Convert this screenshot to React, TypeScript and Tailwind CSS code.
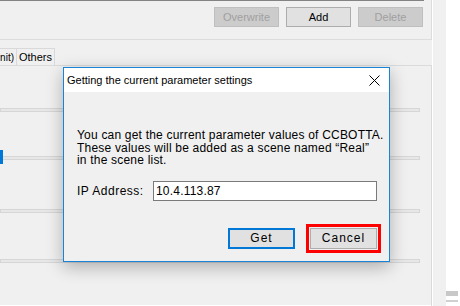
const ui = "font-['Liberation_Sans',Arial,sans-serif]";

function TopButton({ label, disabled }: { label: string; disabled?: boolean }) {
  return (
    <div
      className={
        "flex h-[20px] w-[65px] items-center justify-center border text-[11px] " +
        (disabled
          ? "border-[#bfbfbf] bg-[#cccccc] text-[#a0a0a0]"
          : "border-[#adadad] bg-[#e1e1e1] text-black")
      }
    >
      {label}
    </div>
  );
}

function Track() {
  return <div className="h-[4px] w-[420px] border border-[#d6d6d6] bg-[#e7e7e7]" />;
}

function Dialog() {
  return (
    <div
      className={`absolute left-[63px] top-[67px] flex h-[195px] w-[327px] flex-col border border-[#1883d7] bg-[#f0f0f0] shadow-[0_5px_16px_rgba(0,0,0,0.28)] ${ui}`}
    >
      <div className="flex h-[24px] items-center justify-between bg-white pl-[3px] pr-[9px] text-[11px] text-black">
        <span>Getting the current parameter settings</span>
        <svg width="11" height="11" viewBox="0 0 11 11">
          <path d="M0.5 0.5L10.5 10.5M10.5 0.5L0.5 10.5" stroke="#000" strokeWidth="1" />
        </svg>
      </div>
      <div className="flex flex-1 flex-col whitespace-nowrap pl-[13px] pt-[37px] text-[12px] tracking-[0.2px] text-black">
        <p className="leading-[12.5px]">
          You can get the current parameter values of CCBOTTA.
          <br />
          These values will be added as a scene named “Real”
          <br />
          in the scene list.
        </p>
        <div className="mt-[14px] flex items-center">
          <span className="w-[76px] tracking-[0.5px]">IP Address:</span>
          <div className="flex h-[20px] w-[224px] items-center border border-[#7a7a7a] bg-white pl-[2px]">
            10.4.113.87
          </div>
        </div>
        <div className="mt-[23px] flex items-center pl-[151px]">
          <div className="flex h-[21px] w-[67px] items-center justify-center border-2 border-[#0078d7] bg-[#e1e1e1] tracking-[1px]">
            Get
          </div>
          <div className="ml-[11px] border-[3px] border-[#ff0000] p-[1px]">
            <div className="flex h-[21px] w-[67px] items-center justify-center border border-[#adadad] bg-[#e1e1e1] tracking-[1px]">
              Cancel
            </div>
          </div>
        </div>
      </div>
    </div>
  );
}

export default function App() {
  return (
    <div className={`relative flex h-[306px] w-[460px] overflow-hidden bg-[#f0f0f0] ${ui}`}>
      <div className="flex w-[432px] flex-col">
        <div className="h-[40px] border-b border-r border-[#dcdcdc]">
          <div className="h-[1px] w-[424px] bg-[#838383]" />
          <div className="flex justify-end gap-[7px] pr-[8px] pt-[6px]">
            <TopButton label="Overwrite" disabled />
            <TopButton label="Add" />
            <TopButton label="Delete" disabled />
          </div>
        </div>
        <div className="mt-[8px] flex h-[17px] text-[10px] text-black">
          <div className="flex w-[17px] items-center justify-end border-r border-t border-[#d9d9d9] pr-[2px]">
            nit)
          </div>
          <div className="flex w-[38px] items-center justify-center border-r border-t border-[#d9d9d9] text-[11px]">
            Others
          </div>
        </div>
        <div className="relative flex flex-1 flex-col border-r border-t border-[#dadada] pt-[42px]">
          <Track />
          <div className="relative mt-[44px]">
            <Track />
            <div className="absolute left-0 top-[-6px] h-[14px] w-[3px] bg-[#0078d7]" />
          </div>
          <div className="mt-[49px]">
            <Track />
          </div>
          <div className="mt-[46px]">
            <Track />
          </div>
          <div className="absolute bottom-0 left-0 right-0 h-[1px] bg-white" />
        </div>
      </div>
      <div className="w-[14px] border-l border-white" />
      <div className="flex flex-1 flex-col justify-end bg-white pb-[4px]">
        <div className="mb-[4px] h-[5px] w-[12px] bg-[#c8c8c8]" />
        <div className="h-[2px] w-[12px] bg-[#d0d0d0]" />
      </div>
      <Dialog />
    </div>
  );
}
